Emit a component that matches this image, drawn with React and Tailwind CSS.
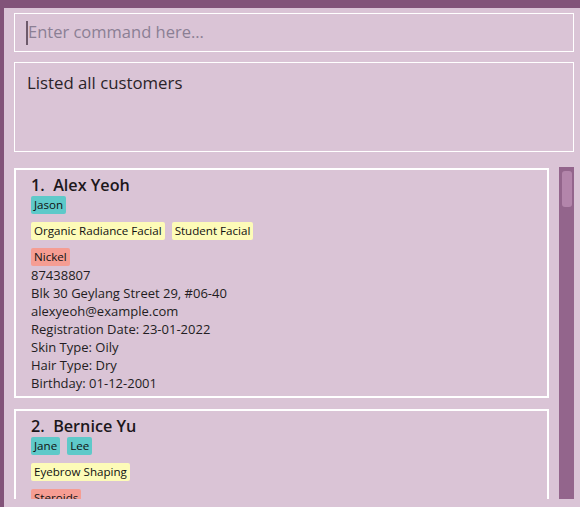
import React from 'react';

const customers = [
  {
    name: 'Alex Yeoh',
    friends: ['Jason'],
    treatments: ['Organic Radiance Facial', 'Student Facial'],
    allergies: ['Nickel'],
    phone: '87438807',
    address: 'Blk 30 Geylang Street 29, #06-40',
    email: 'alexyeoh@example.com',
    regDate: '23-01-2022',
    skin: 'Oily',
    hair: 'Dry',
    birthday: '01-12-2001',
  },
  {
    name: 'Bernice Yu',
    friends: ['Jane', 'Lee'],
    treatments: ['Eyebrow Shaping'],
    allergies: ['Steroids'],
    phone: '99272758',
    address: 'Blk 30 Lorong 3 Serangoon Gardens, #07-18',
    email: 'berniceyu@example.com',
    regDate: '15-03-2022',
    skin: 'Dry',
    hair: 'Oily',
    birthday: '22-07-1999',
  },
];

const Tag = ({ text, color }) => (
  <span className={`${color} rounded-[2px] px-[3px] h-[18px] flex items-center text-[11.6px] leading-[18px] text-[#111] font-medium`}>
    {text}
  </span>
);

const TagRow = ({ items, color, last }) => (
  <div className={`flex gap-[7px] h-[18px] ${last ? '' : 'mb-[8px]'}`}>
    {items.map((t) => <Tag key={t} text={t} color={color} />)}
  </div>
);

const CustomerCard = ({ index, c }) => (
  <div className="border-2 border-white pl-[15px] pt-[4px] pb-[4px] shrink-0">
    <div className="text-[16.2px] leading-[22px] font-semibold text-[#1c171b]">
      {index}.&nbsp;&nbsp;{c.name}
    </div>
    <TagRow items={c.friends} color="bg-[#5ec9c9]" />
    <TagRow items={c.treatments} color="bg-[#fdfbb8]" />
    <TagRow items={c.allergies} color="bg-[#f59d93]" last />
    <div className="text-[13px] leading-[18px] text-[#231d22]">
      <div>{c.phone}</div>
      <div>{c.address}</div>
      <div>{c.email}</div>
      <div>Registration Date: {c.regDate}</div>
      <div>Skin Type: {c.skin}</div>
      <div>Hair Type: {c.hair}</div>
      <div>Birthday: {c.birthday}</div>
    </div>
  </div>
);

export default function App() {
  return (
    <div
      className="w-[580px] h-[507px] overflow-hidden bg-[#dac4d6] border-t-8 border-l-4 border-[#825379]"
      style={{ fontFamily: '"Open Sans", "Noto Sans", sans-serif' }}
    >
      <div className="pl-[10px] pr-[6px] pt-[5px] flex flex-col">
        {/* command box */}
        <div className="h-[39px] border border-white flex items-center pl-[11px]">
          <span className="w-[2px] h-[24px] bg-[#6e5a6b]" />
          <span className="text-[16.5px] text-[#8b7f94]">Enter command here...</span>
        </div>

        {/* result box */}
        <div className="h-[90px] border border-white mt-[10px] pl-[12px] pt-[8px] text-[16.8px] leading-[24px] text-[#2a2329]">
          Listed all customers
        </div>

        {/* list */}
        <div className="flex mt-[15px] h-[332px] overflow-hidden">
          <div className="w-[535px] flex flex-col gap-[11px] pt-px">
            {customers.map((c, i) => <CustomerCard key={c.name} index={i + 1} c={c} />)}
          </div>
          <div className="ml-[10px] w-[15px] h-full bg-[#93658c] pt-[4px] flex justify-center">
            <div className="w-[10px] h-[36px] rounded-[3px] bg-[#b385ab]" />
          </div>
        </div>
      </div>
    </div>
  );
}
